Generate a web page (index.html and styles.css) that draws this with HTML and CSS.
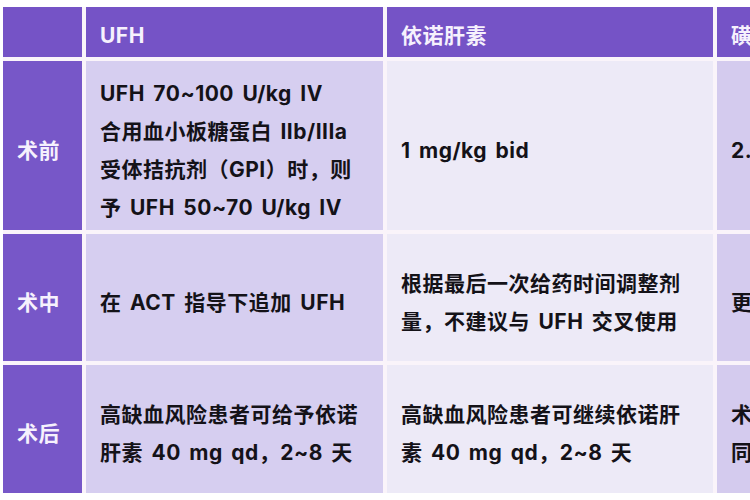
FILE: index.html
```html
<!DOCTYPE html>
<html lang="zh">
<head>
<meta charset="utf-8">
<link rel="stylesheet" href="styles.css">
</head>
<body>
<div class="table">
  <div class="cell head side"></div>
  <div class="cell head">UFH</div>
  <div class="cell head">依诺肝素</div>
  <div class="cell head">磺达肝癸钠</div>

  <div class="cell side">术前</div>
  <div class="cell c2"><p>UFH 70~100 U/kg IV<br>合用血小板糖蛋白 IIb/IIIa<br>受体拮抗剂（GPI）时，则<br>予 UFH 50~70 U/kg IV</p></div>
  <div class="cell c3"><p>1 mg/kg bid</p></div>
  <div class="cell c4"><p>2.5 mg qd</p></div>

  <div class="cell side">术中</div>
  <div class="cell c2"><p>在 ACT 指导下追加 UFH</p></div>
  <div class="cell c3"><p>根据最后一次给药时间调整剂<br>量，不建议与 UFH 交叉使用</p></div>
  <div class="cell c4"><p>更推荐 UFH</p></div>

  <div class="cell side">术后</div>
  <div class="cell c2"><p>高缺血风险患者可给予依诺<br>肝素 40 mg qd，2~8 天</p></div>
  <div class="cell c3"><p>高缺血风险患者可继续依诺肝<br>素 40 mg qd，2~8 天</p></div>
  <div class="cell c4"><p>术后 2.5 mg qd<br>同前</p></div>
</div>
</body>
</html>
```

FILE: styles.css
```css
html, body {
  margin: 0;
  padding: 0;
  background: #ffffff;
  overflow: hidden;
  width: 750px;
  height: 500px;
}
body {
  font-family: "Inter", "Noto Sans CJK SC", sans-serif;
  font-weight: 700;
  color: #141218;
}
.table {
  display: grid;
  grid-template-columns: 79px 297px 326px 240px;
  grid-template-rows: 50px 169px 127px 128px;
  gap: 4px;
  margin: 7px 0 0 3px;
  background: #faf4fa;
  width: max-content;
}
.cell {
  display: flex;
  align-items: center;
  padding: 10px 0 0 14px;
  box-sizing: border-box;
  font-size: 21px;
  line-height: 38px;
  letter-spacing: 0.5px;
  word-spacing: 3px;
  white-space: nowrap;
  overflow: hidden;
}
.cell p { margin: 0; }
.head {
  background: #7553c6;
  color: #f6f1fd;
  padding-top: 8px;
}
.side {
  background: #7757c8;
  color: #f6f1fd;
}
.head.side { background: #7553c6; }
.c2 { background: #d6cef0; }
.c3 { background: #edeaf7; }
.c4 { background: #d4cbee; }
```
